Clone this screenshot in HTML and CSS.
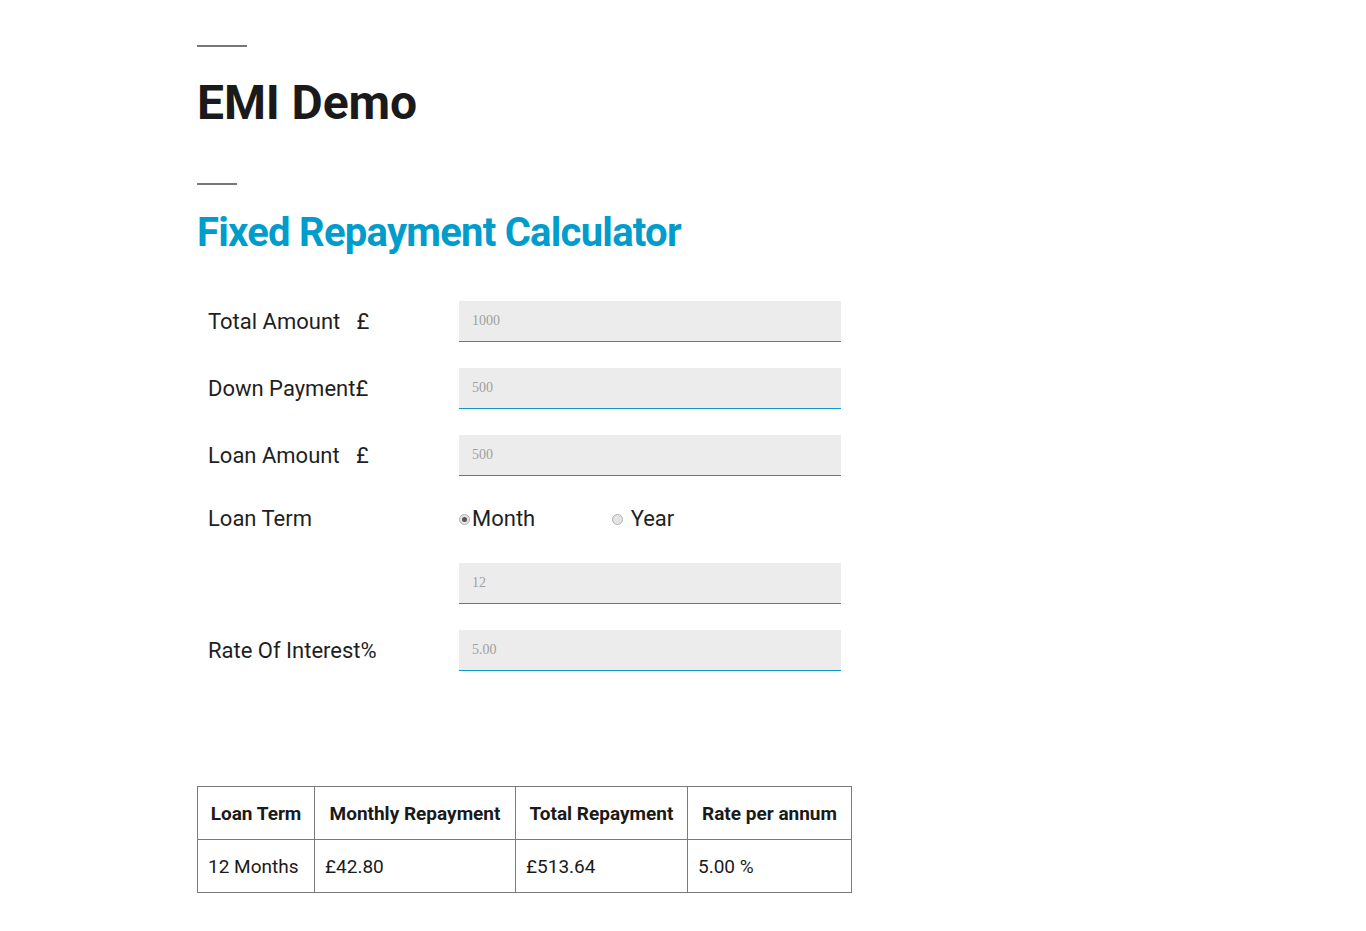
FILE: index.html
```html
<!DOCTYPE html>
<html>
<head>
<meta charset="utf-8">
<link rel="stylesheet" href="styles.css">
</head>
<body>
<main class="page">
  <hr class="rule rule-lg">
  <h1 class="title">EMI Demo</h1>
  <hr class="rule rule-sm">
  <h2 class="subtitle">Fixed Repayment Calculator</h2>

  <form class="calc">
    <div class="row">
      <label class="label">Total Amount &nbsp;&nbsp;£</label>
      <input class="field" type="text" placeholder="1000">
    </div>
    <div class="row">
      <label class="label">Down Payment£</label>
      <input class="field" type="text" placeholder="500">
    </div>
    <div class="row">
      <label class="label">Loan Amount &nbsp;&nbsp;£</label>
      <input class="field" type="text" placeholder="500">
    </div>
    <div class="row row-radio">
      <label class="label">Loan Term</label>
      <div class="radios">
        <label class="radio-opt"><span class="radio checked"></span>Month</label>
        <label class="radio-opt radio-year"><span class="radio"></span>&nbsp;Year</label>
      </div>
    </div>
    <div class="row row-term">
      <span class="label"></span>
      <input class="field" type="text" placeholder="12">
    </div>
    <div class="row">
      <label class="label">Rate Of Interest%</label>
      <input class="field" type="text" placeholder="5.00">
    </div>
  </form>

  <table class="result">
    <colgroup>
      <col class="c1"><col class="c2"><col class="c3"><col class="c4">
    </colgroup>
    <thead>
      <tr>
        <th>Loan Term</th>
        <th>Monthly Repayment</th>
        <th>Total Repayment</th>
        <th>Rate per annum</th>
      </tr>
    </thead>
    <tbody>
      <tr>
        <td>12 Months</td>
        <td>£42.80</td>
        <td>£513.64</td>
        <td>5.00 %</td>
      </tr>
    </tbody>
  </table>
</main>
</body>
</html>
```

FILE: styles.css
```css
html, body {
  margin: 0;
  padding: 0;
  background: #fff;
}
body {
  font-family: Roboto, "Liberation Sans", sans-serif;
  color: #1a1a1a;
}
.page {
  width: 654px;
  margin-left: 197px;
  padding-top: 45px;
}
.rule {
  border: 0;
  height: 2px;
  background: #777;
  margin: 0;
}
.rule-lg { width: 50px; }
.rule-sm { width: 40px; }
.title {
  font-size: 48px;
  font-weight: 700;
  letter-spacing: -0.1px;
  margin: 26px 0 50px;
  line-height: 60px;
  height: 60px;
  color: #1a1a1a;
}
.subtitle {
  font-size: 40px;
  font-weight: 700;
  letter-spacing: -0.75px;
  color: #009ccb;
  margin: 23px 0 0;
  line-height: 50px;
  height: 50px;
}
.calc {
  margin-top: 43px;
  display: flex;
  flex-direction: column;
  gap: 26px;
}
.row {
  display: flex;
  align-items: center;
  height: 41px;
}
.label {
  width: 251px;
  padding-left: 11px;
  font-size: 22px;
  line-height: 26px;
  color: #1f1f1f;
}
.field {
  width: 382px;
  height: 41px;
  box-sizing: border-box;
  border: 0;
  border-bottom: 1px solid #0d9ac8;
  background: #ececec;
  padding: 0 13px;
  font-family: "Liberation Serif", serif;
  font-size: 14px;
  outline: none;
}
.field::placeholder {
  color: #a0a0a0;
}
.row-radio {
  height: 16px;
  margin-top: 9px;
}
.row-term {
  margin-top: 10px;
}
.radios {
  display: flex;
  font-size: 22px;
  line-height: 26px;
  color: #1f1f1f;
}
.radio-opt {
  display: flex;
  align-items: center;
}
.radio-year {
  margin-left: 77px;
}
.radio {
  width: 11px;
  height: 11px;
  box-sizing: border-box;
  border-radius: 50%;
  border: 1px solid #b0b0b0;
  background: #e4e4e4;
  margin-right: 2px;
  position: relative;
}
.radio.checked::after {
  content: "";
  position: absolute;
  left: 2px;
  top: 2px;
  width: 5px;
  height: 5px;
  border-radius: 50%;
  background: #555;
}
.result {
  margin-top: 115px;
  width: 654px;
  table-layout: fixed;
  border-collapse: collapse;
  font-size: 19px;
  color: #1a1a1a;
}
.c1 { width: 117px; }
.c2 { width: 201px; }
.c3 { width: 172px; }
.c4 { width: 164px; }
.result th, .result td {
  border: 1px solid #7a7a7a;
  height: 52px;
  padding: 0 10px;
  text-align: left;
  white-space: nowrap;
}
.result th {
  font-weight: 700;
  text-align: center;
  padding: 0 4px;
}
```
